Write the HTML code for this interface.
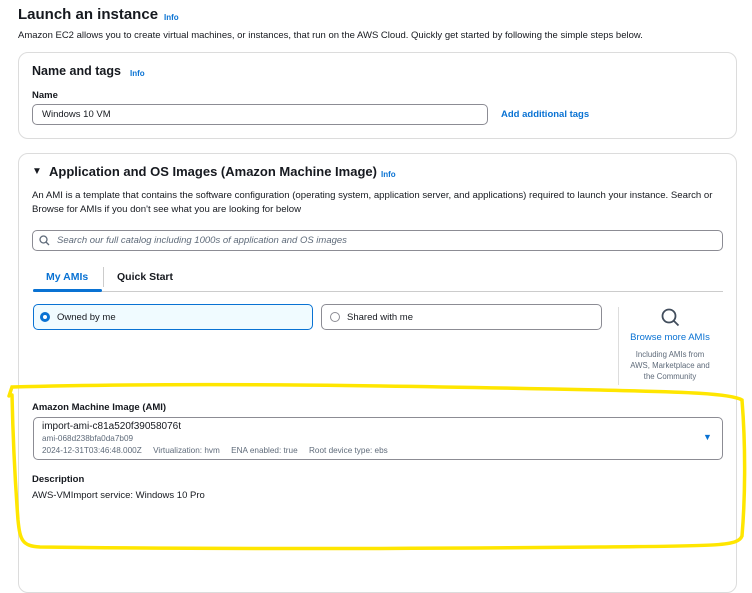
<!DOCTYPE html>
<html><head><style>
body{margin:0;width:752px;height:554px;background:#fff;font-family:"Liberation Sans",sans-serif;color:#16191f;position:relative;overflow:hidden}
.a{position:absolute;white-space:nowrap}
.s{font-size:9.5px}
.b{font-weight:bold}
.info{color:#0972d3;font-weight:bold;font-size:8px}
.blue{color:#0972d3}
.gray{color:#5f6b7a}
.box{position:absolute;box-sizing:border-box}
</style></head><body>
<div class="a b" style="left:18px;top:6px;font-size:15px">Launch an instance</div>
<div class="a info" style="left:164px;top:13px">Info</div>
<div class="a s" style="left:18px;top:30px">Amazon EC2 allows you to create virtual machines, or instances, that run on the AWS Cloud. Quickly get started by following the simple steps below.</div>

<div class="box" style="left:18px;top:52px;width:719px;height:87px;border:1px solid #dcdcdc;border-radius:10px"></div>
<div class="a b" style="left:32px;top:64px;font-size:12.5px">Name and tags</div>
<div class="a info" style="left:130px;top:69px">Info</div>
<div class="a s b" style="left:32px;top:90px">Name</div>
<div class="box" style="left:32px;top:104px;width:456px;height:21px;border:1px solid #8c8c94;border-radius:5px"></div>
<div class="a s" style="left:42px;top:109px">Windows 10 VM</div>
<div class="a s b blue" style="left:501px;top:109px">Add additional tags</div>

<div class="box" style="left:18px;top:153px;width:719px;height:440px;border:1px solid #dcdcdc;border-radius:10px"></div>
<div class="a" style="left:32px;top:166px;font-size:10px">▼</div>
<div class="a b" style="left:49px;top:164px;font-size:13px">Application and OS Images (Amazon Machine Image)</div>
<div class="a info" style="left:381px;top:170px">Info</div>
<div class="a" style="left:32px;top:189px;line-height:14px;font-size:9.6px">An AMI is a template that contains the software configuration (operating system, application server, and applications) required to launch your instance. Search or<br>Browse for AMIs if you don't see what you are looking for below</div>
<div class="box" style="left:32px;top:230px;width:691px;height:21px;border:1px solid #8c8c94;border-radius:5px"></div>
<svg class="a" style="left:39px;top:235px" width="11" height="11" viewBox="0 0 11 11"><circle cx="4.5" cy="4.5" r="3.5" fill="none" stroke="#5f6b7a" stroke-width="1.3"/><path d="M7 7l3 3" stroke="#5f6b7a" stroke-width="1.3"/></svg>
<div class="a s gray" style="left:57px;top:235px;font-style:italic">Search our full catalog including 1000s of application and OS images</div>

<div class="a b blue" style="left:46px;top:271px;font-size:10.5px">My AMIs</div>
<div class="a" style="left:103px;top:267px;width:1px;height:20px;background:#ccc"></div>
<div class="a b" style="left:117px;top:271px;font-size:10.5px">Quick Start</div>
<div class="a" style="left:33px;top:291px;width:690px;height:1px;background:#ccc"></div>
<div class="a" style="left:33px;top:289px;width:69px;height:3px;background:#0972d3;border-radius:2px"></div>

<div class="box" style="left:33px;top:304px;width:280px;height:26px;border:1.5px solid #0972d3;border-radius:5px;background:#f0fbff"></div>
<div class="box" style="left:40px;top:312px;width:10px;height:10px;border-radius:50%;border:3px solid #0972d3;background:#fff"></div>
<div class="a s" style="left:57px;top:312px">Owned by me</div>
<div class="box" style="left:321px;top:304px;width:281px;height:26px;border:1px solid #8c8c94;border-radius:5px"></div>
<div class="box" style="left:330px;top:312px;width:10px;height:10px;border-radius:50%;border:1px solid #8c8c94"></div>
<div class="a s" style="left:347px;top:312px">Shared with me</div>
<div class="a" style="left:618px;top:307px;width:1px;height:78px;background:#ddd"></div>
<svg class="a" style="left:660px;top:307px" width="22" height="22" viewBox="0 0 22 22"><circle cx="9" cy="9" r="6.5" fill="none" stroke="#414d5c" stroke-width="1.8"/><path d="M13.5 13.5l5 5" stroke="#414d5c" stroke-width="1.8"/></svg>
<div class="a s blue" style="left:620px;top:332px;width:100px;text-align:center">Browse more AMIs</div>
<div class="a gray" style="left:620px;top:349px;width:100px;text-align:center;font-size:7.8px;line-height:11px">Including AMIs from<br>AWS, Marketplace and<br>the Community</div>

<div class="a s b" style="left:32px;top:402px">Amazon Machine Image (AMI)</div>
<div class="box" style="left:33px;top:417px;width:690px;height:43px;border:1px solid #8c8c94;border-radius:5px"></div>
<div class="a" style="left:42px;top:421px;font-size:10px">import-ami-c81a520f39058076t</div>
<div class="a gray" style="left:42px;top:434px;font-size:8.2px">ami-068d238bfa0da7b09</div>
<div class="a gray" style="left:42px;top:446px;font-size:8.2px">2024-12-31T03:46:48.000Z&nbsp;&nbsp;&nbsp;&nbsp; Virtualization: hvm&nbsp;&nbsp;&nbsp;&nbsp; ENA enabled: true&nbsp;&nbsp;&nbsp;&nbsp; Root device type: ebs</div>
<div class="a" style="left:703px;top:432px;font-size:9px;color:#0972d3">▼</div>
<div class="a s b" style="left:32px;top:474px">Description</div>
<div class="a s" style="left:32px;top:490px">AWS-VMImport service: Windows 10 Pro</div>

<svg class="a" style="left:0;top:0" width="752" height="554"><path d="M9 396 L12 387 C200 382 420 386 600 390 C680 392 730 393 742 400 C746 450 745 500 742 536 C738 546 720 546 600 547 C400 549 200 549 40 547 C22 546 20 540 18 520 C15 480 13 440 12 395" fill="none" stroke="#ffe600" stroke-width="3.5" stroke-linecap="round"/></svg>
</body></html>
